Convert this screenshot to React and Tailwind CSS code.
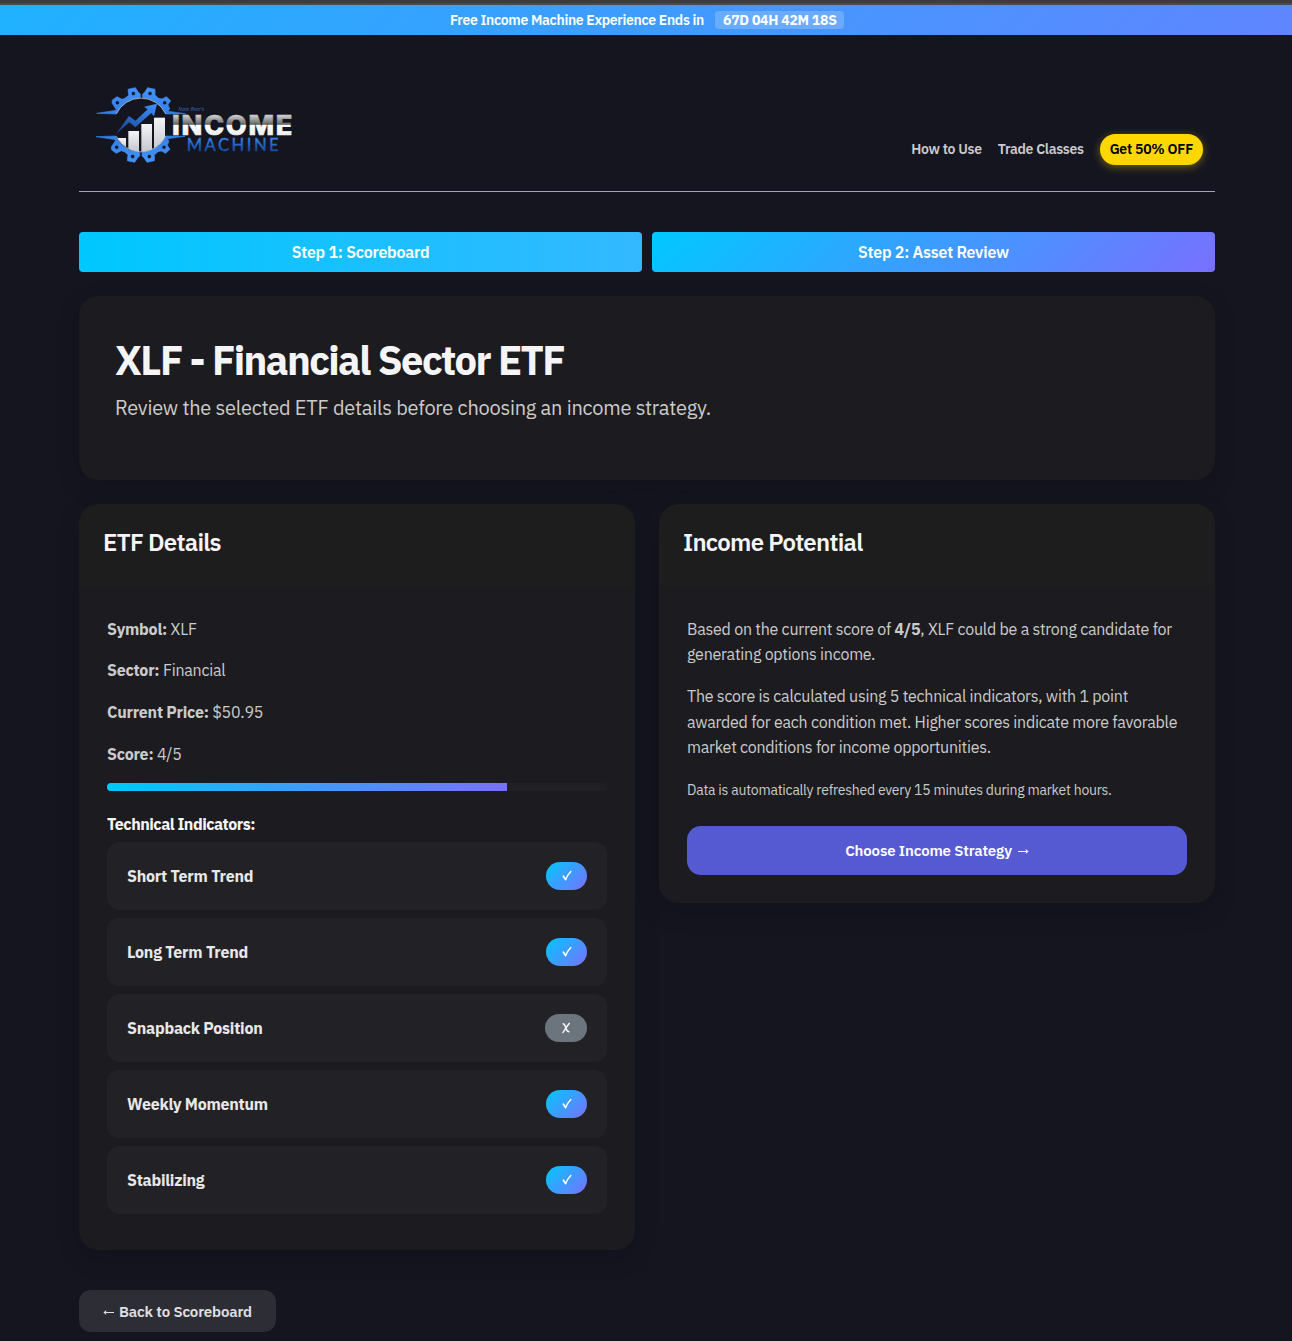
import React from 'react';

const indicators = [
  { name: 'Short Term Trend', ok: true },
  { name: 'Long Term Trend', ok: true },
  { name: 'Snapback Position', ok: false },
  { name: 'Weekly Momentum', ok: true },
  { name: 'Stabilizing', ok: true },
];

const details = [
  ['Symbol:', 'XLF'],
  ['Sector:', 'Financial'],
  ['Current Price:', '$50.95'],
  ['Score:', '4/5'],
];

function GearHalf() {
  return (
    <path
      fillRule="evenodd"
      d="M50 115L102 107L109 104L96 84L97 75L111 65L126 73L135 70L146 61L144 43L166 38L175 52L181 57L181 68A82 82 0 0 0 109 117Z
         M188 57L194 52L203 38L225 43L225 60L236 70L246 72L259 65L272 77L264 89L269 102L264 109L317 116L257 117A82 82 0 0 0 188 68Z
         M112 77.5a6 6 0 1 0 .1 0Z M160 49.5a6 6 0 1 0 .1 0Z M210 49.5a6 6 0 1 0 .1 0Z M254 77.5a6 6 0 1 0 .1 0Z"
    />
  );
}

function Logo() {
  return (
    <svg width="230" height="100" viewBox="0 0 690 300" className="block shrink-0">
      <defs>
        <linearGradient id="gear" x1="0" y1="0" x2="0" y2="1">
          <stop offset="0" stopColor="#4492fb" />
          <stop offset="1" stopColor="#347fe8" />
        </linearGradient>
        <linearGradient id="arrow" x1="0" y1="1" x2="0.8" y2="0">
          <stop offset="0" stopColor="#163f86" />
          <stop offset="1" stopColor="#3b8bf8" />
        </linearGradient>
        <linearGradient id="bars" x1="0" y1="0" x2="0" y2="1">
          <stop offset="0" stopColor="#f4f4f6" />
          <stop offset="1" stopColor="#c3c5cc" />
        </linearGradient>
        <linearGradient id="chrome" gradientUnits="userSpaceOnUse" x1="0" y1="121" x2="0" y2="181">
          <stop offset="0" stopColor="#cfcfcf" />
          <stop offset="0.45" stopColor="#666666" />
          <stop offset="0.5" stopColor="#ffffff" />
          <stop offset="1" stopColor="#ececec" />
        </linearGradient>
        <linearGradient id="machine" gradientUnits="userSpaceOnUse" x1="0" y1="192" x2="0" y2="230">
          <stop offset="0" stopColor="#3480e8" />
          <stop offset="1" stopColor="#12499c" />
        </linearGradient>
        <clipPath id="dial">
          <circle cx="183" cy="150" r="80" />
        </clipPath>
      </defs>
      <g fill="url(#gear)" stroke="url(#gear)" strokeWidth="2" strokeLinejoin="round">
        <GearHalf />
        <g transform="translate(-2 300) scale(1 -1)">
          <GearHalf />
        </g>
      </g>
      <path d="M109 116A82 82 0 0 1 257 116M109 184A82 82 0 0 0 257 184" fill="none" stroke="#b8bac2" strokeWidth="2.5" />
      <g fill="url(#bars)" clipPath="url(#dial)">
        <rect x="106" y="189" width="32" height="44" />
        <rect x="145" y="168" width="32" height="65" />
        <rect x="184" y="147" width="32" height="86" />
        <rect x="222" y="128" width="33" height="105" />
      </g>
      <path d="M108 177L147 123L166 137L203 103L192 95L231 86L222 124L214 114L166 157L148 142Z" fill="url(#arrow)" />
      <text x="295" y="109" fontSize="16" fontStyle="italic" fill="#3467ad" textLength="77" lengthAdjust="spacingAndGlyphs" fontFamily="'Open Sans', sans-serif">Nate Bear’s</text>
      <text x="276" y="181" fontSize="80" fontWeight="800" fill="url(#chrome)" stroke="url(#chrome)" strokeWidth="2" textLength="366" lengthAdjust="spacingAndGlyphs" fontFamily="Inter, sans-serif" letterSpacing="5">INCOME</text>
      <text x="320" y="228" fontSize="50" fill="url(#machine)" stroke="url(#machine)" strokeWidth="1" letterSpacing="0" textLength="276" lengthAdjust="spacing" fontFamily="Lato, sans-serif">MACHINE</text>
    </svg>
  );
}

function Check() {
  return (
    <svg width="10" height="11" viewBox="0 0 10 11" fill="none" stroke="white" strokeLinecap="round" strokeLinejoin="round">
      <path d="M1.4 6.2L3.6 9.6" strokeWidth="1.8" />
      <path d="M3.6 9.6Q5.6 4.7 8.8 1.4" strokeWidth="1.4" />
    </svg>
  );
}

function Cross() {
  return (
    <svg width="10" height="12" viewBox="0 0 10 12" fill="none" stroke="#f6f7f8" strokeLinecap="round">
      <path d="M2.2 1.8Q3.8 2.2 4.8 5.8T7.8 9.8" strokeWidth="1.6" />
      <path d="M8.2 1.4Q4.8 5.5 2 10.5" strokeWidth="1.5" />
    </svg>
  );
}

function Arrow({ className }) {
  return (
    <svg width="11" height="7" viewBox="0 0 11 7" fill="none" stroke="currentColor" className={className}>
      <path d="M0 3.5H10" strokeWidth="1" />
      <path d="M7.6 1L10.6 3.5L7.6 6Q8.6 3.5 7.6 1Z" fill="currentColor" stroke="none" />
    </svg>
  );
}

function Card({ title, children }) {
  return (
    <section className="overflow-hidden rounded-[20px] bg-[#1c1b1f] shadow-[0_8px_24px_rgba(0,0,0,0.15)]">
      <div className="h-[84.8px] bg-[#1d1d1e] px-6 pt-6">
        <h2 className="text-2xl leading-[29px] font-semibold tracking-[-0.72px] text-[#f5f5f7]">{title}</h2>
      </div>
      <div className="p-7">{children}</div>
    </section>
  );
}

export default function App() {
  return (
    <div className="h-[1341px] overflow-hidden bg-[#151520] font-['IBM_Plex_Sans',sans-serif] text-base leading-[25.6px] tracking-[-0.24px] text-[#cbcbcc]">
      <div className="h-[3px] bg-[#3c3c3c]" />
      <div className="h-[2px] bg-[#4a4a4a]" />
      <div className="flex h-[30px] items-center justify-center bg-[linear-gradient(135deg,#1fb2ff,#5f85ff)] pl-0.5 text-sm font-semibold text-white">
        <span className="tracking-[-0.31px]">Free Income Machine Experience Ends in</span>
        <span className="ml-[11px] flex h-[18px] w-[129px] items-center rounded bg-white/20 pl-2 font-bold whitespace-nowrap">67D 04H 42M 18S</span>
      </div>

      <div className="ml-[79px] w-[1136px]">
        <header className="flex h-[157px] items-end justify-between border-b border-[#a3a3b8] pr-3">
          <div className="mb-4 ml-px">
            <Logo />
          </div>
          <nav className="mb-[26px] flex items-center gap-4 text-sm font-semibold tracking-[-0.3px]">
            <a className="pb-0.5">How to Use</a>
            <a className="pb-0.5">Trade Classes</a>
            <a className="flex h-[31px] items-center rounded-full bg-[#ffd700] px-[10px] pb-px tracking-[-0.24px] text-black shadow-[0_2px_8px_rgba(255,215,0,0.4)]">Get 50% OFF</a>
          </nav>
        </header>

        <div className="mt-10 grid grid-cols-2 gap-[10px] text-center leading-10 font-semibold text-white">
          <div className="rounded bg-[linear-gradient(90deg,#00c8ff,#33b8ff)]">Step 1: Scoreboard</div>
          <div className="rounded bg-[linear-gradient(135deg,#00c8ff,#7970ff)]">Step 2: Asset Review</div>
        </div>

        <section className="mt-6 h-[184px] rounded-[20px] bg-[#1c1b1f] px-9 pt-10 shadow-[0_8px_24px_rgba(0,0,0,0.15)]">
          <h1 className="text-[40px] leading-[48px] font-bold tracking-[-1.6px] text-[#f5f5f7]">XLF - Financial Sector ETF</h1>
          <p className="mt-2 text-xl leading-8">Review the selected ETF details before choosing an income strategy.</p>
        </section>

        <div className="mt-6 grid grid-cols-2 items-start gap-6">
          <Card title="ETF Details">
            <div className="space-y-4">
              {details.map(([label, value]) => (
                <p key={label}>
                  <strong className="font-bold">{label}</strong> {value}
                </p>
              ))}
            </div>
            <div className="mt-[15.8px] h-2 overflow-hidden rounded bg-[#202024]">
              <div className="h-full w-4/5 bg-[linear-gradient(90deg,#00c8ff,#7970ff)]" />
            </div>
            <h3 className="mt-6 mb-2 leading-[19px] font-bold tracking-[-0.48px] text-[#f5f5f7]">Technical Indicators:</h3>
            {indicators.map((item) => (
              <div key={item.name} className="mb-2 flex h-[68px] items-center justify-between rounded-xl bg-[#222125] px-5">
                <strong className="pt-0.5 font-bold text-[#e8e8e9]">{item.name}</strong>
                {item.ok ? (
                  <span className="flex h-7 w-[41px] items-center justify-center rounded-[14px] bg-[linear-gradient(135deg,#00c8ff,#7970ff)]">
                    <Check />
                  </span>
                ) : (
                  <span className="flex h-7 w-[42px] items-center justify-center rounded-[14px] bg-[#6c757d]">
                    <Cross />
                  </span>
                )}
              </div>
            ))}
          </Card>

          <Card title="Income Potential">
            <p>
              Based on the current score of <strong className="font-bold">4/5</strong>, XLF could be a strong candidate for generating options income.
            </p>
            <p className="mt-4">
              The score is calculated using 5 technical indicators, with 1 point awarded for each condition met. Higher scores indicate more favorable market conditions for income opportunities.
            </p>
            <p className="mt-[17px] text-sm leading-[25.6px]">Data is automatically refreshed every 15 minutes during market hours.</p>
            <button className="mt-[22.6px] flex h-[49px] w-full items-center justify-center gap-[6px] rounded-[14px] bg-[#555ad2] text-[15px] font-semibold tracking-[-0.15px] text-white">
              <span>Choose Income Strategy</span>
              <Arrow className="mt-[2px]" />
            </button>
          </Card>
        </div>

        <button className="mt-10 flex h-[42px] w-[197px] items-center justify-center gap-[5px] rounded-xl bg-[#2d2d35] text-[15px] font-semibold tracking-[-0.15px] text-[#e0e0e2]">
          <Arrow className="mt-[3px] rotate-180" />
          <span className="pt-0.5">Back to Scoreboard</span>
        </button>
      </div>
    </div>
  );
}
